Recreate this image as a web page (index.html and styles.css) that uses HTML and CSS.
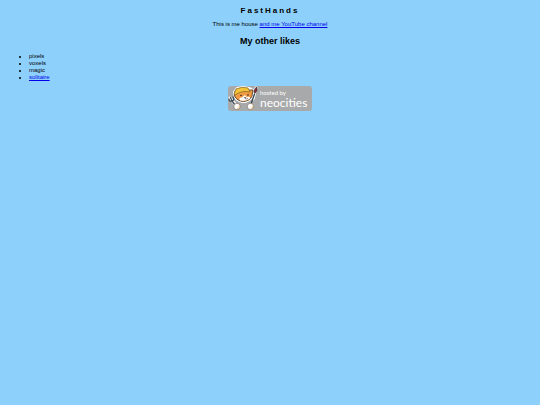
FILE: index.html
```html
<!DOCTYPE html>
<html lang="en">
  <head>
    <meta charset="UTF-8">
    <meta name="viewport" content="width=device-width, initial-scale=1.0">
    <title>FastHands</title>
    <link rel="stylesheet" href="styles.css">
  </head>
  <body>
    <h1 class="title">FastHands</h1>
    <p class="intro">This is me house <a href="#channel">and me YouTube channel</a></p>
    <h2 class="subtitle">My other likes</h2>
    <ul class="likes">
      <li>pixels</li>
      <li>voxels</li>
      <li>magic</li>
      <li><a href="#solitaire">solitaire</a></li>
    </ul>
    <footer class="footer">
      <a class="badge" href="#neocities">
        <svg class="badge-cat" viewBox="0 0 31 25" aria-hidden="true">
          <!-- white outline -->
          <g fill="#fff" stroke="#fff" stroke-width="2" stroke-linejoin="round" stroke-linecap="round">
            <path d="M6 6 L9 2 L15 1 L21 2 L25 4 L24 11 Q21 16 15 16 Q9 15 7 11Z"/>
            <path d="M2 12 L7 18 M28 2 L25 13" stroke-width="3"/>
          </g>
          <!-- fork -->
          <path d="M4 15 L8 20 M1 13 Q1 16 4 15 Q7 14 5 11 M2.5 11.5 L4 15" fill="none" stroke="#3f505c" stroke-width="1.3" stroke-linecap="round"/>
          <!-- brush -->
          <path d="M26.5 8 L23 18" stroke="#34424b" stroke-width="1.3" stroke-linecap="round"/>
          <path d="M28.5 1 Q30 4 27.5 7 L26 6.5 Q26 3 28.5 1Z" fill="#972b3b" stroke="#392d32" stroke-width=".7"/>
          <!-- head -->
          <path d="M6.5 10 L7 5 L21 4 L25 4 L24 10 Q22 15 15.5 15.5 Q9 15 6.5 10Z" fill="#f09a42" stroke="#493225" stroke-width=".8"/>
          <path d="M17 9 L18.5 11 Q23 10 22 12.5 Q18 16 12 14.3 Q10 12 14 11.5Z" fill="#fff"/>
          <path d="M6 8 L8 3 Q14 0 20 2 L22 6 Q14 4 7 9Z" fill="#f3c43a" stroke="#80601e" stroke-width=".7"/>
          <circle cx="13" cy="9.5" r=".8" fill="#302923"/>
          <circle cx="20" cy="9" r=".8" fill="#302923"/>
          <path d="M16 11.5 L18 11.5 L17 12.5 Q18 13.5 20 12.5" fill="none" stroke="#513329" stroke-width=".6"/>
          <!-- paws -->
          <circle cx="9" cy="20.5" r="3.2" fill="#fff" stroke="#6b5d50" stroke-width=".6"/>
          <circle cx="22.5" cy="20.5" r="3.2" fill="#fff" stroke="#6b5d50" stroke-width=".6"/>
          <path d="M9 23 Q11.5 22 11.5 19.5 M22.5 23 Q25 22 25 19.5" fill="none" stroke="#e8b269" stroke-width=".9"/>
        </svg>
        <span class="badge-text">
          <span class="badge-small">hosted by</span>
          <span class="badge-name">neocities</span>
        </span>
      </a>
    </footer>
  </body>
</html>
```
FILE: styles.css
```css
body {
  margin: 6px 8px;
  background-color: #8ed0fc;
  color: #000;
  font-family: "Liberation Sans", Arial, sans-serif;
  font-size: 6px;
  line-height: 7px;
}

a {
  color: #00e;
}

.title {
  margin: 0;
  font-size: 8px;
  line-height: 9px;
  letter-spacing: 2px;
  text-align: center;
}

.intro {
  margin: 6px 0;
  text-align: center;
}

.subtitle {
  margin: 0;
  padding-top: 2px;
  font-size: 9px;
  line-height: 10px;
  text-align: center;
}

.likes {
  margin: 7px 0 5px;
  padding-left: 21px;
}

.footer {
  display: flex;
  justify-content: center;
}

.badge {
  display: flex;
  gap: 1px;
  width: 84px;
  height: 25px;
  border-radius: 3px;
  background-color: #a7a9aa;
  color: #fff;
  text-decoration: none;
}

.badge-cat {
  width: 31px;
  height: 25px;
  flex: none;
  overflow: visible;
}

.badge-text {
  display: flex;
  flex-direction: column;
  padding-top: 3px;
  font-family: Lato, "Open Sans", sans-serif;
  white-space: nowrap;
}

.badge-small {
  font-size: 6px;
  line-height: 7px;
}

.badge-name {
  font-size: 12px;
  line-height: 14px;
}
```
